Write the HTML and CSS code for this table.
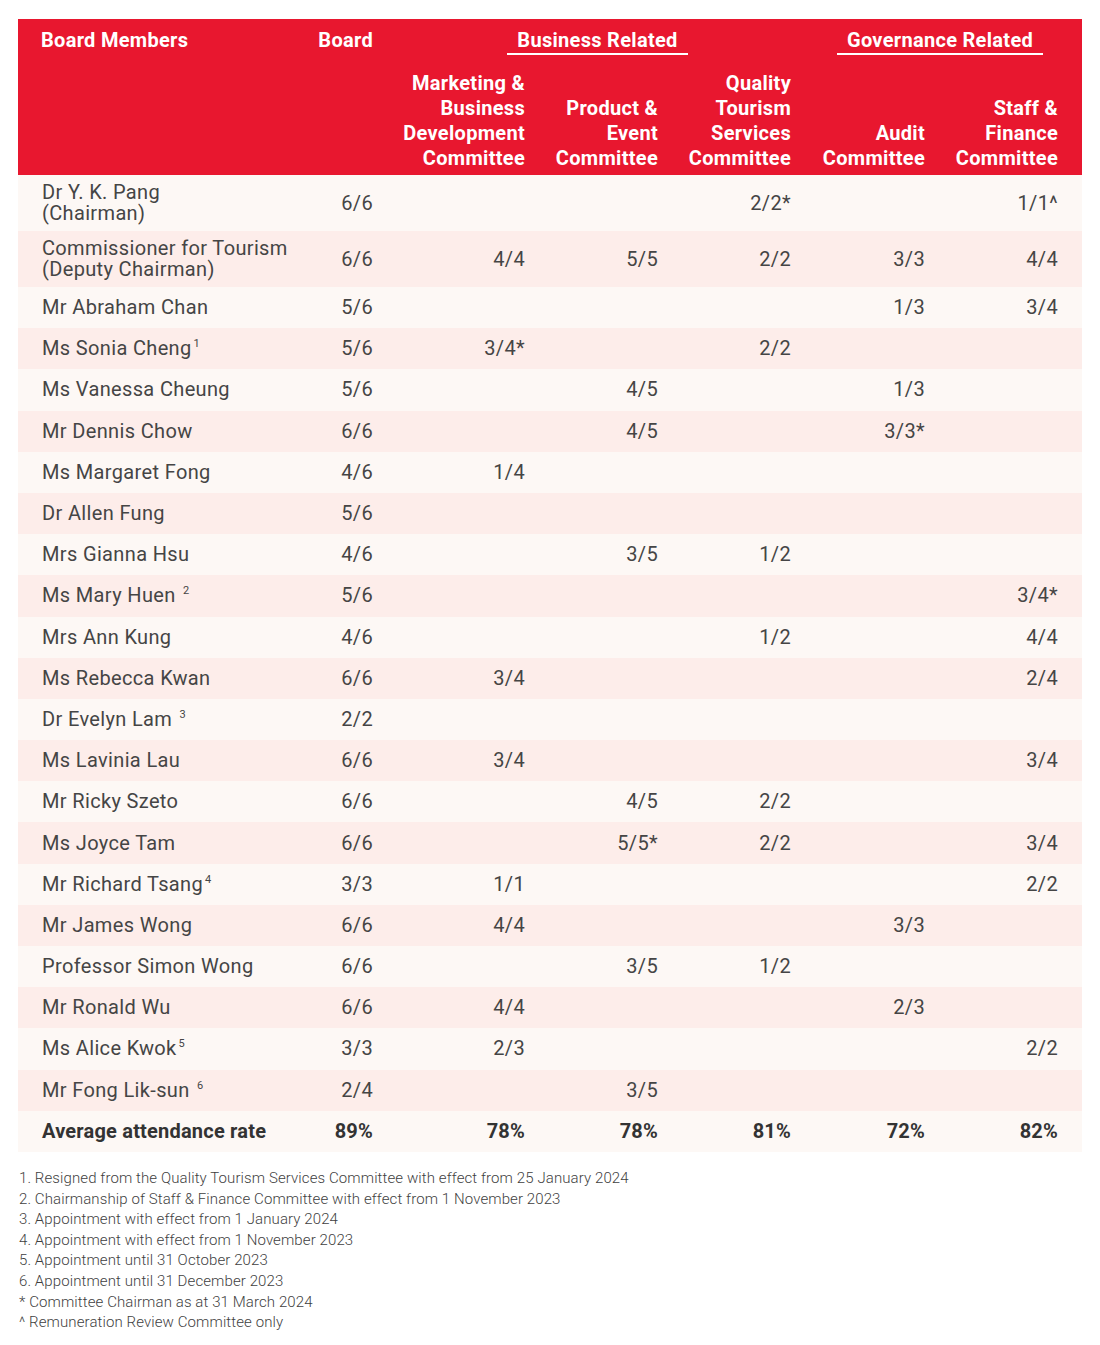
FILE: index.html
```
<!DOCTYPE html>
<html lang="en">
<head>
<meta charset="utf-8">
<title>Board Attendance</title>
<link rel="stylesheet" href="styles.css">
</head>
<body>
<div class="page">
<table class="att">
  <colgroup>
    <col class="c-name"><col class="c-board"><col class="c-mkt"><col class="c-std"><col class="c-std"><col class="c-aud"><col class="c-std">
  </colgroup>
  <thead>
    <tr class="h1">
      <th class="left">Board Members</th>
      <th>Board</th>
      <th colspan="3" class="grp"><span>Business Related</span></th>
      <th colspan="2" class="grp"><span>Governance Related</span></th>
    </tr>
    <tr class="h2">
      <th></th>
      <th></th>
      <th>Marketing &amp;<br>Business<br>Development<br>Committee</th>
      <th>Product &amp;<br>Event<br>Committee</th>
      <th>Quality<br>Tourism<br>Services<br>Committee</th>
      <th>Audit<br>Committee</th>
      <th>Staff &amp;<br>Finance<br>Committee</th>
    </tr>
  </thead>
  <tbody>
    <tr class="tall"><td class="name">Dr Y. K. Pang<br>(Chairman)</td><td>6/6</td><td></td><td></td><td>2/2*</td><td></td><td>1/1^</td></tr>
    <tr class="tall"><td class="name">Commissioner for Tourism<br>(Deputy Chairman)</td><td>6/6</td><td>4/4</td><td>5/5</td><td>2/2</td><td>3/3</td><td>4/4</td></tr>
    <tr><td class="name">Mr Abraham Chan</td><td>5/6</td><td></td><td></td><td></td><td>1/3</td><td>3/4</td></tr>
    <tr><td class="name">Ms Sonia Cheng<sup>1</sup></td><td>5/6</td><td>3/4*</td><td></td><td>2/2</td><td></td><td></td></tr>
    <tr><td class="name">Ms Vanessa Cheung</td><td>5/6</td><td></td><td>4/5</td><td></td><td>1/3</td><td></td></tr>
    <tr><td class="name">Mr Dennis Chow</td><td>6/6</td><td></td><td>4/5</td><td></td><td>3/3*</td><td></td></tr>
    <tr><td class="name">Ms Margaret Fong</td><td>4/6</td><td>1/4</td><td></td><td></td><td></td><td></td></tr>
    <tr><td class="name">Dr Allen Fung</td><td>5/6</td><td></td><td></td><td></td><td></td><td></td></tr>
    <tr><td class="name">Mrs Gianna Hsu</td><td>4/6</td><td></td><td>3/5</td><td>1/2</td><td></td><td></td></tr>
    <tr><td class="name">Ms Mary Huen <sup>2</sup></td><td>5/6</td><td></td><td></td><td></td><td></td><td>3/4*</td></tr>
    <tr><td class="name">Mrs Ann Kung</td><td>4/6</td><td></td><td></td><td>1/2</td><td></td><td>4/4</td></tr>
    <tr><td class="name">Ms Rebecca Kwan</td><td>6/6</td><td>3/4</td><td></td><td></td><td></td><td>2/4</td></tr>
    <tr><td class="name">Dr Evelyn Lam <sup>3</sup></td><td>2/2</td><td></td><td></td><td></td><td></td><td></td></tr>
    <tr><td class="name">Ms Lavinia Lau</td><td>6/6</td><td>3/4</td><td></td><td></td><td></td><td>3/4</td></tr>
    <tr><td class="name">Mr Ricky Szeto</td><td>6/6</td><td></td><td>4/5</td><td>2/2</td><td></td><td></td></tr>
    <tr><td class="name">Ms Joyce Tam</td><td>6/6</td><td></td><td>5/5*</td><td>2/2</td><td></td><td>3/4</td></tr>
    <tr><td class="name">Mr Richard Tsang<sup>4</sup></td><td>3/3</td><td>1/1</td><td></td><td></td><td></td><td>2/2</td></tr>
    <tr><td class="name">Mr James Wong</td><td>6/6</td><td>4/4</td><td></td><td></td><td>3/3</td><td></td></tr>
    <tr><td class="name">Professor Simon Wong</td><td>6/6</td><td></td><td>3/5</td><td>1/2</td><td></td><td></td></tr>
    <tr><td class="name">Mr Ronald Wu</td><td>6/6</td><td>4/4</td><td></td><td></td><td>2/3</td><td></td></tr>
    <tr><td class="name">Ms Alice Kwok<sup>5</sup></td><td>3/3</td><td>2/3</td><td></td><td></td><td></td><td>2/2</td></tr>
    <tr><td class="name">Mr Fong Lik-sun <sup>6</sup></td><td>2/4</td><td></td><td>3/5</td><td></td><td></td><td></td></tr>
    <tr class="avg"><td class="name">Average attendance rate</td><td>89%</td><td>78%</td><td>78%</td><td>81%</td><td>72%</td><td>82%</td></tr>
  </tbody>
</table>
<ol class="notes">
  <li>1. Resigned from the Quality Tourism Services Committee with effect from 25 January 2024</li>
  <li>2. Chairmanship of Staff &amp; Finance Committee with effect from 1 November 2023</li>
  <li>3. Appointment with effect from 1 January 2024</li>
  <li>4. Appointment with effect from 1 November 2023</li>
  <li>5. Appointment until 31 October 2023</li>
  <li>6. Appointment until 31 December 2023</li>
  <li>* Committee Chairman as at 31 March 2024</li>
  <li>^ Remuneration Review Committee only</li>
</ol>
</div>
</body>
</html>
```
FILE: styles.css
```
* { box-sizing: border-box; }
html, body { margin: 0; padding: 0; background: #ffffff; }
body { font-family: Roboto, "Liberation Sans", sans-serif; color: #454545; }
.page { padding: 19px 18px 0 18px; }

.att {
  width: 1064px;
  border-collapse: collapse;
  table-layout: fixed;
}
.c-name { width: 254px; }
.c-board { width: 125px; }
.c-mkt { width: 152px; }
.c-std { width: 133px; }
.c-aud { width: 134px; }

.att thead { background: #e8172f; color: #ffffff; }
.att th {
  font-weight: 700;
  font-size: 20px;
  line-height: 25px;
  letter-spacing: 0.3px;
  text-align: right;
  padding: 0 24px 0 0;
  white-space: nowrap;
}
.att th.left { text-align: left; padding-left: 23px; }
.h1 th { padding-top: 9px; vertical-align: top; height: 44px; }
.h1 th.grp { text-align: center; padding-right: 17px; }
.h1 th.grp span {
  display: inline-block;
  padding: 0 10px 0;
  border-bottom: 2px solid #ffffff;
}
.h2 th { vertical-align: bottom; padding-bottom: 4px; padding-top: 8px; }

.att td {
  font-size: 20px;
  line-height: 21px;
  letter-spacing: 0.35px;
  height: 41.2px;
  padding: 0 24px 0 0;
  text-align: right;
  vertical-align: middle;
  white-space: nowrap;
}
.att td.name { text-align: left; padding-left: 24px; }
.att tr.tall td { height: 56px; }
.att tbody tr:nth-child(odd) { background: #fdf8f5; }
.att tbody tr:nth-child(even) { background: #fdedea; }
.att tr.avg td { font-weight: 700; color: #333333; letter-spacing: 0.2px; }
.att sup { font-size: 11px; line-height: 0; vertical-align: 8px; margin-left: 2px; letter-spacing: 0; }

.notes {
  list-style: none;
  margin: 16px 0 0 1px;
  padding: 0;
  font-size: 15px;
  font-weight: 300;
  line-height: 20.6px;
  letter-spacing: 0.1px;
  color: #3f3f3f;
}
```
